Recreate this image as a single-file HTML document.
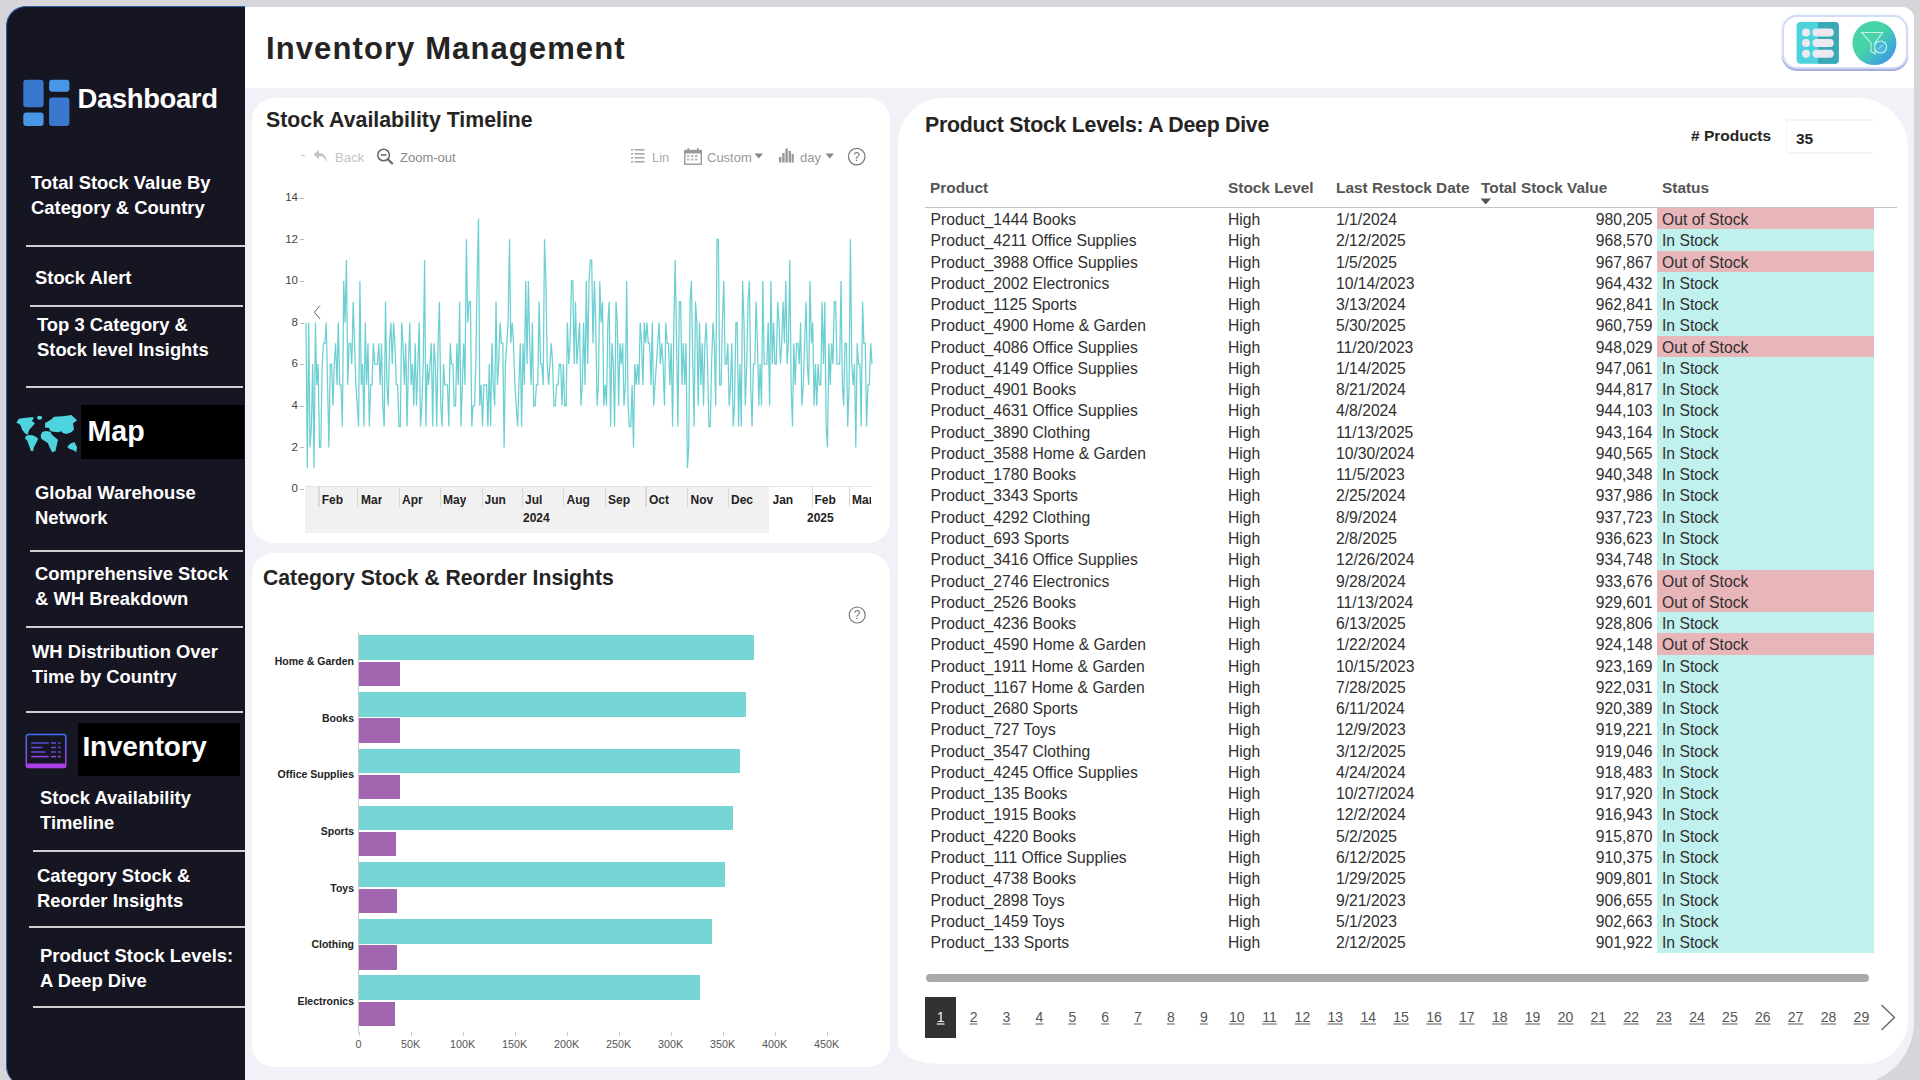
<!DOCTYPE html>
<html><head><meta charset="utf-8"><title>Inventory Management</title>
<style>
*{margin:0;padding:0;box-sizing:border-box}
html,body{width:1920px;height:1080px;overflow:hidden;background:#d6d5da;font-family:"Liberation Sans",sans-serif;position:relative}
.abs{position:absolute}
#side{position:absolute;left:6px;top:6px;width:239px;height:1080px;background:#161522;border-radius:20px 0 0 20px;border-top:1px solid #2d5ea8;border-left:1px solid #2d5ea8}
.nav{position:absolute;color:#fff;font-weight:bold;font-size:18.4px;line-height:24.7px;white-space:nowrap;margin-top:0.8px}
.sep{position:absolute;height:2px;background:#cfcfd2}
.hdr{position:absolute;color:#fff;font-weight:bold;white-space:nowrap}
#main{position:absolute;left:245px;top:7px;width:1669px;height:1078px;background:#f2f1f7;border-top-right-radius:12px;border-bottom-right-radius:63px;overflow:hidden}
#mainhead{position:absolute;left:0;top:0;width:1671px;height:81px;background:#fff}
.card{position:absolute;background:#fff}
.ttl{position:absolute;font-weight:bold;color:#252423;white-space:nowrap}
.tb{position:absolute;font-size:13px;color:#999;white-space:nowrap;margin-top:1.5px}
.yl{position:absolute;font-size:11.5px;color:#444;text-align:right;width:30px}
.ml{position:absolute;font-size:12px;font-weight:bold;color:#222;white-space:nowrap}
.cl{position:absolute;font-size:10.5px;font-weight:bold;color:#222;white-space:nowrap;text-align:right;width:110px}
.xl{position:absolute;font-size:10.8px;color:#555;white-space:nowrap;text-align:center;width:40px}
.th{position:absolute;font-size:15.4px;font-weight:bold;color:#555;white-space:nowrap;top:178.7px}
.tr{position:absolute;left:0;width:1920px;height:21.23px;font-size:15.7px;color:#303030;white-space:nowrap}
.tr span{position:absolute;top:0;line-height:23px}
.c1{left:930.5px}.c2{left:1228px}.c3{left:1336px}
.c4{left:1501.5px;width:151px;text-align:right}
.c5{left:1657px;width:217px;padding-left:5px;height:21.6px}
.c5.in{background:#c0f1ef}.c5.out{background:#e8b5b9}
.pg{position:absolute;top:997px;width:31px;height:41px;line-height:41px;text-align:center;font-size:14px;color:#555;text-decoration:underline;text-decoration-color:#aaa;text-decoration-thickness:2px;text-underline-offset:1.2px}
.pg.cur{background:#323232;color:#f4f4f4}

</style></head><body>
<div id="side">
</div>

<svg class="abs" style="left:23px;top:79px" width="47" height="47">
  <rect x="0.3" y="0.7" width="20.3" height="27.5" rx="3" fill="#3a78d0"/>
  <rect x="26.1" y="0.7" width="20.3" height="12.1" rx="3" fill="#4a96e6"/>
  <rect x="0.3" y="33.4" width="20.3" height="13.5" rx="3" fill="#4a96e6"/>
  <rect x="26.1" y="18.5" width="20.3" height="28.4" rx="3" fill="#3a78d0"/>
</svg>
<svg class="abs" style="left:14px;top:410px" width="68" height="48">
  <g fill="#4ed4de">
  <path d="M2.7,12.2 L4.9,8.7 L12,7.8 L19.1,7.1 L19.6,8.9 L17.8,10.7 L20.9,13.3 L18.7,16 L15.1,20 L14.2,23.1 L13.3,24.9 L10.7,23.1 L8,19.6 L6.7,15.6 L4.9,13.8 L2.7,12.9 Z"/>
  <path d="M11.6,26.2 L14.7,24.9 L18.7,25.3 L23.1,27.6 L24,29.3 L22.2,32.9 L20,36.9 L19.1,41.3 L16.9,40.9 L15.1,35.6 L13.3,30.7 L11.1,28.4 Z"/>
  <ellipse cx="25.6" cy="7.8" rx="2.6" ry="2"/>
  <path d="M31.1,12.9 L36.9,9.8 L40,6.7 L48.9,6.2 L57.3,5.1 L63.1,10.2 L59.1,13.3 L60,19.6 L57.3,22.2 L52.4,24 L48.9,23.1 L47.1,21.3 L44.4,22.2 L39.1,21.8 L36.4,20.9 L34.7,17.8 L31.1,17.8 Z"/>
  <path d="M26.7,24.9 L28.4,21.8 L32,20.9 L36.4,21.8 L38.2,24.9 L44,29.8 L42.7,35.6 L41.3,41.3 L38.2,42.2 L35.6,37.3 L33.8,32.9 L30.2,30.7 L27.1,28.4 Z"/>
  <path d="M53.3,36.9 L56,33.8 L60.4,32 L63.1,37.3 L62.2,42.2 L59.1,40 L55.6,39.1 Z"/>
  </g>
</svg>
<svg class="abs" style="left:25px;top:733px" width="43" height="37">
  <defs><linearGradient id="ig" x1="0" y1="0" x2="0" y2="1"><stop offset="0" stop-color="#3d74f0"/><stop offset="1" stop-color="#b03ce8"/></linearGradient></defs>
  <rect x="1.3" y="1.5" width="39.5" height="33" rx="2" fill="none" stroke="url(#ig)" stroke-width="1.5"/>
  <rect x="1.3" y="30.5" width="39.5" height="4.3" rx="1" fill="#a83fe6"/>
  <g stroke-width="1.5">
    <g stroke="#5550dc"><line x1="6.3" y1="10" x2="23.7" y2="10"/><line x1="26" y1="10" x2="31" y2="10"/><line x1="33" y1="10" x2="35.7" y2="10"/></g>
    <g stroke="#5c4edc"><line x1="6.3" y1="14.5" x2="17.5" y2="14.5"/><line x1="26" y1="14.5" x2="31" y2="14.5"/><line x1="33" y1="14.5" x2="35.7" y2="14.5"/></g>
    <g stroke="#6a48de"><line x1="6.3" y1="19" x2="20.5" y2="19"/><line x1="26" y1="19" x2="31" y2="19"/><line x1="33" y1="19" x2="35.7" y2="19"/></g>
    <g stroke="#9444ee"><line x1="6.3" y1="23.6" x2="23.7" y2="23.6"/><line x1="26" y1="23.6" x2="31" y2="23.6"/><line x1="33" y1="23.6" x2="35.7" y2="23.6"/></g>
  </g>
</svg>
<div class="hdr" style="left:77.5px;top:82.5px;font-size:27.5px;letter-spacing:-0.4px">Dashboard</div>
<div class="nav" style="left:31px;top:170px">Total Stock Value By<br>Category &amp; Country</div>
<div class="sep" style="left:26px;top:245px;width:219px"></div>
<div class="nav" style="left:35px;top:265px">Stock Alert</div>
<div class="sep" style="left:30px;top:305px;width:213px"></div>
<div class="nav" style="left:37px;top:312px">Top 3 Category &amp;<br>Stock level Insights</div>
<div class="sep" style="left:26px;top:386px;width:217px"></div>
<div class="abs" style="left:81px;top:405px;width:163px;height:54px;background:#000"></div>
<div class="hdr" style="left:87.5px;top:414.5px;font-size:28.6px">Map</div>
<div class="nav" style="left:35px;top:480px">Global Warehouse<br>Network</div>
<div class="sep" style="left:30px;top:550px;width:213px"></div>
<div class="nav" style="left:35px;top:561px">Comprehensive Stock<br>&amp; WH Breakdown</div>
<div class="sep" style="left:26px;top:626px;width:217px"></div>
<div class="nav" style="left:32px;top:639px">WH Distribution Over<br>Time by Country</div>
<div class="sep" style="left:26px;top:711px;width:217px"></div>
<div class="abs" style="left:78px;top:723px;width:162px;height:53px;background:#000"></div>
<div class="hdr" style="left:82.5px;top:731px;font-size:28px;letter-spacing:-0.2px">Inventory</div>
<div class="nav" style="left:40px;top:785px">Stock Availability<br>Timeline</div>
<div class="sep" style="left:33px;top:850px;width:212px"></div>
<div class="nav" style="left:37px;top:863px">Category Stock &amp;<br>Reorder Insights</div>
<div class="sep" style="left:29px;top:926px;width:216px"></div>
<div class="nav" style="left:40px;top:943px">Product Stock Levels:<br>A Deep Dive</div>
<div class="sep" style="left:33px;top:1006px;width:212px"></div>

<div id="main">
  <div id="mainhead"></div>
</div>

<div class="abs" style="left:1782px;top:15px;width:126px;height:54px;border-radius:15px;border:2px solid #d3dcf6;box-shadow:0 2px 0 #a8acdc, 0 0 3px #dfe6fb;background:#fff"></div>
<svg class="abs" style="left:1796px;top:21px" width="44" height="44">
  <rect x="0.6" y="0.9" width="42.2" height="41.9" rx="4" fill="#4dd3de"/>
  <path d="M22,0.9 H38.8 A4,4 0 0 1 42.8,4.9 V38.8 A4,4 0 0 1 38.8,42.8 H22 Z" fill="#3aa9b5"/>
  <g fill="#eceaf0">
   <circle cx="10" cy="11.5" r="4"/><circle cx="10" cy="22.1" r="4"/><circle cx="10" cy="32.7" r="4"/>
   <rect x="16.5" y="7.5" width="21.3" height="8" rx="4"/><rect x="16.5" y="18.1" width="21.3" height="8" rx="4"/><rect x="16.5" y="28.7" width="21.3" height="8" rx="4"/>
  </g>
</svg>
<svg class="abs" style="left:1851px;top:20px" width="47" height="47">
  <defs><linearGradient id="fg" x1="0.2" y1="0.2" x2="0.9" y2="0.9"><stop offset="0.35" stop-color="#47d4a9"/><stop offset="1" stop-color="#3a98ec"/></linearGradient></defs>
  <circle cx="23.4" cy="23.1" r="22" fill="url(#fg)"/>
  <path d="M10.6,12.5 H31.5 L24,23 V34 L20,31.5 V23 Z" fill="none" stroke="#c8f0ea" stroke-width="1.1"/>
  <circle cx="29.6" cy="27" r="6" fill="#48b8d8" stroke="#c8f0ea" stroke-width="1.1"/>
  <path d="M27.5,29 L31.5,25" stroke="#c8f0ea" stroke-width="1"/>
</svg>
<div class="ttl" style="left:266px;top:31px;font-size:31px;letter-spacing:1.1px">Inventory Management</div>

<!-- card 1 -->
<div class="card" style="left:252px;top:98px;width:638px;height:445px;border-radius:22px">
  <svg class="abs" style="left:0;top:0" width="638" height="445">
    <polyline points="54.0,224.5 55.3,370.2 56.7,224.5 58.0,349.4 59.4,328.6 60.7,266.1 62.1,370.2 63.4,224.5 64.8,286.9 66.1,266.1 67.5,349.4 68.8,349.4 70.2,266.1 71.5,245.3 72.9,245.3 74.2,224.5 75.6,286.9 76.9,349.4 78.3,266.1 79.6,266.1 81.0,307.8 82.3,266.1 83.6,245.3 85.0,286.9 86.3,224.5 87.7,286.9 89.0,286.9 90.4,328.6 91.7,182.9 93.1,224.5 94.4,162.1 95.8,286.9 97.1,245.3 98.5,245.3 99.8,266.1 101.2,203.7 102.5,245.3 103.9,286.9 105.2,307.8 106.6,328.6 107.9,182.9 109.3,286.9 110.6,266.1 111.9,328.6 113.3,224.5 114.6,286.9 116.0,245.3 117.3,328.6 118.7,286.9 120.0,286.9 121.4,245.3 122.7,266.1 124.1,266.1 125.4,266.1 126.8,245.3 128.1,286.9 129.5,245.3 130.8,307.8 132.2,328.6 133.5,203.7 134.9,286.9 136.2,307.8 137.6,245.3 138.9,224.5 140.2,266.1 141.6,224.5 142.9,245.3 144.3,286.9 145.6,286.9 147.0,328.6 148.3,328.6 149.7,224.5 151.0,245.3 152.4,286.9 153.7,245.3 155.1,328.6 156.4,266.1 157.8,224.5 159.1,286.9 160.5,266.1 161.8,307.8 163.2,245.3 164.5,307.8 165.9,266.1 167.2,224.5 168.5,328.6 169.9,307.8 171.2,266.1 172.6,162.1 173.9,328.6 175.3,266.1 176.6,286.9 178.0,266.1 179.3,245.3 180.7,328.6 182.0,245.3 183.4,266.1 184.7,328.6 186.1,245.3 187.4,203.7 188.8,307.8 190.1,328.6 191.5,266.1 192.8,286.9 194.2,286.9 195.5,286.9 196.8,328.6 198.2,245.3 199.5,266.1 200.9,266.1 202.2,307.8 203.6,307.8 204.9,245.3 206.3,286.9 207.6,203.7 209.0,328.6 210.3,286.9 211.7,245.3 213.0,286.9 214.4,141.3 215.7,224.5 217.1,203.7 218.4,203.7 219.8,328.6 221.1,307.8 222.5,307.8 223.8,266.1 225.1,182.9 226.5,120.5 227.8,307.8 229.2,286.9 230.5,328.6 231.9,286.9 233.2,286.9 234.6,286.9 235.9,328.6 237.3,266.1 238.6,328.6 240.0,245.3 241.3,286.9 242.7,307.8 244.0,203.7 245.4,286.9 246.7,266.1 248.1,224.5 249.4,245.3 250.8,245.3 252.1,349.4 253.4,266.1 254.8,245.3 256.1,224.5 257.5,141.3 258.8,245.3 260.2,224.5 261.5,245.3 262.9,286.9 264.2,307.8 265.6,328.6 266.9,286.9 268.3,245.3 269.6,328.6 271.0,245.3 272.3,286.9 273.7,182.9 275.0,266.1 276.4,182.9 277.7,245.3 279.1,286.9 280.4,224.5 281.7,307.8 283.1,307.8 284.4,286.9 285.8,286.9 287.1,203.7 288.5,266.1 289.8,266.1 291.2,286.9 292.5,141.3 293.9,182.9 295.2,266.1 296.6,286.9 297.9,266.1 299.3,245.3 300.6,266.1 302.0,307.8 303.3,307.8 304.7,286.9 306.0,286.9 307.4,266.1 308.7,266.1 310.0,307.8 311.4,266.1 312.7,307.8 314.1,307.8 315.4,224.5 316.8,266.1 318.1,245.3 319.5,182.9 320.8,182.9 322.2,266.1 323.5,203.7 324.9,266.1 326.2,245.3 327.6,224.5 328.9,307.8 330.3,286.9 331.6,224.5 333.0,286.9 334.3,182.9 335.7,266.1 337.0,182.9 338.3,162.1 339.7,162.1 341.0,245.3 342.4,182.9 343.7,224.5 345.1,307.8 346.4,286.9 347.8,182.9 349.1,224.5 350.5,203.7 351.8,307.8 353.2,286.9 354.5,307.8 355.9,224.5 357.2,203.7 358.6,328.6 359.9,245.3 361.3,266.1 362.6,328.6 364.0,203.7 365.3,224.5 366.6,307.8 368.0,245.3 369.3,266.1 370.7,245.3 372.0,307.8 373.4,286.9 374.7,182.9 376.1,307.8 377.4,328.6 378.8,328.6 380.1,286.9 381.5,349.4 382.8,266.1 384.2,286.9 385.5,266.1 386.9,286.9 388.2,224.5 389.6,245.3 390.9,286.9 392.3,224.5 393.6,245.3 394.9,224.5 396.3,245.3 397.6,245.3 399.0,286.9 400.3,224.5 401.7,307.8 403.0,286.9 404.4,266.1 405.7,245.3 407.1,224.5 408.4,266.1 409.8,245.3 411.1,266.1 412.5,307.8 413.8,224.5 415.2,245.3 416.5,245.3 417.9,286.9 419.2,245.3 420.6,328.6 421.9,224.5 423.2,162.1 424.6,245.3 425.9,328.6 427.3,203.7 428.6,203.7 430.0,286.9 431.3,245.3 432.7,286.9 434.0,245.3 435.4,370.2 436.7,349.4 438.1,203.7 439.4,182.9 440.8,266.1 442.1,328.6 443.5,203.7 444.8,224.5 446.2,307.8 447.5,224.5 448.9,286.9 450.2,245.3 451.5,307.8 452.9,245.3 454.2,224.5 455.6,266.1 456.9,328.6 458.3,328.6 459.6,266.1 461.0,224.5 462.3,245.3 463.7,307.8 465.0,141.3 466.4,141.3 467.7,286.9 469.1,286.9 470.4,224.5 471.8,182.9 473.1,266.1 474.5,266.1 475.8,245.3 477.2,307.8 478.5,286.9 479.8,245.3 481.2,328.6 482.5,307.8 483.9,224.5 485.2,224.5 486.6,328.6 487.9,266.1 489.3,328.6 490.6,182.9 492.0,224.5 493.3,307.8 494.7,266.1 496.0,203.7 497.4,182.9 498.7,286.9 500.1,328.6 501.4,266.1 502.8,266.1 504.1,203.7 505.5,245.3 506.8,307.8 508.1,266.1 509.5,307.8 510.8,182.9 512.2,266.1 513.5,266.1 514.9,266.1 516.2,224.5 517.6,307.8 518.9,182.9 520.3,266.1 521.6,224.5 523.0,266.1 524.3,266.1 525.7,203.7 527.0,224.5 528.4,266.1 529.7,245.3 531.1,203.7 532.4,245.3 533.8,182.9 535.1,266.1 536.4,245.3 537.8,162.1 539.1,286.9 540.5,328.6 541.8,245.3 543.2,286.9 544.5,245.3 545.9,245.3 547.2,266.1 548.6,224.5 549.9,307.8 551.3,286.9 552.6,245.3 554.0,203.7 555.3,266.1 556.7,286.9 558.0,182.9 559.4,245.3 560.7,224.5 562.1,307.8 563.4,266.1 564.7,307.8 566.1,266.1 567.4,286.9 568.8,286.9 570.1,203.7 571.5,266.1 572.8,203.7 574.2,328.6 575.5,349.4 576.9,245.3 578.2,286.9 579.6,245.3 580.9,266.1 582.3,203.7 583.6,203.7 585.0,266.1 586.3,266.1 587.7,266.1 589.0,182.9 590.4,286.9 591.7,307.8 593.0,245.3 594.4,245.3 595.7,328.6 597.1,286.9 598.4,141.3 599.8,266.1 601.1,286.9 602.5,266.1 603.8,349.4 605.2,245.3 606.5,266.1 607.9,266.1 609.2,328.6 610.6,203.7 611.9,245.3 613.3,245.3 614.6,328.6 616.0,286.9 617.3,286.9 618.7,245.3 620.0,266.1" fill="none" stroke="#6ccfd2" stroke-width="1.25"/>
  </svg>
</div>
<div class="ttl" style="left:266px;top:107.5px;font-size:21.3px">Stock Availability Timeline</div>
<!-- line chart toolbar -->
<div class="abs" style="left:301px;top:155px;width:4px;height:1.3px;background:#ccc"></div>
<svg class="abs" style="left:312px;top:148px" width="17" height="17">
  <path d="M7,2 L1.5,6.5 L7,11 V8.2 C10.5,8 13.3,9.3 14.6,14.5 C15,9.5 12.5,5.2 7,4.9 Z" fill="#c4c4c4"/>
</svg>
<div class="tb" style="left:335px;top:148px;color:#c4c4c4">Back</div>
<svg class="abs" style="left:375px;top:147px" width="20" height="19">
  <circle cx="8.6" cy="8" r="5.8" fill="none" stroke="#666" stroke-width="1.5"/>
  <line x1="5.8" y1="8" x2="11.4" y2="8" stroke="#666" stroke-width="1.6"/>
  <line x1="12.8" y1="12.2" x2="17.8" y2="17" stroke="#666" stroke-width="2.2"/>
</svg>
<div class="tb" style="left:400px;top:148px;color:#888">Zoom-out</div>
<svg class="abs" style="left:631px;top:148px" width="14" height="16">
  <g fill="#aaa"><rect x="0" y="1" width="2" height="1.6"/><rect x="3.5" y="1" width="10" height="1.6"/>
  <rect x="0" y="5" width="2" height="1.6"/><rect x="3.5" y="5" width="10" height="1.6"/>
  <rect x="0" y="9" width="2" height="1.6"/><rect x="3.5" y="9" width="10" height="1.6"/>
  <rect x="0" y="13" width="2" height="1.6"/><rect x="3.5" y="13" width="10" height="1.6"/></g>
</svg>
<div class="tb" style="left:652px;top:148px;color:#aaa">Lin</div>
<svg class="abs" style="left:684px;top:148px" width="19" height="17">
  <rect x="0.8" y="2.5" width="16.5" height="13.7" fill="none" stroke="#999" stroke-width="1.4"/>
  <rect x="0.8" y="2.5" width="16.5" height="3" fill="#999"/>
  <rect x="3.5" y="0" width="1.6" height="4" fill="#999"/><rect x="13" y="0" width="1.6" height="4" fill="#999"/>
  <g fill="#bbb"><rect x="3" y="7" width="2.5" height="2"/><rect x="7" y="7" width="2.5" height="2"/><rect x="11" y="7" width="2.5" height="2"/>
  <rect x="3" y="10.5" width="2.5" height="2"/><rect x="7" y="10.5" width="2.5" height="2"/><rect x="11" y="10.5" width="2.5" height="2"/></g>
</svg>
<div class="tb" style="left:707px;top:148px;color:#999">Custom</div>
<svg class="abs" style="left:754px;top:153px" width="10" height="6"><path d="M0.5,0.5 H9 L4.75,5.5 Z" fill="#888"/></svg>
<svg class="abs" style="left:779px;top:148px" width="15" height="15">
  <g fill="#999"><rect x="0" y="9" width="2.4" height="5.5"/><rect x="3.2" y="5" width="2.4" height="9.5"/><rect x="6.4" y="0.5" width="2.4" height="14"/><rect x="9.6" y="3" width="2.4" height="11.5"/><rect x="12.6" y="6" width="2.2" height="8.5"/></g>
</svg>
<div class="tb" style="left:800px;top:148px;color:#999">day</div>
<svg class="abs" style="left:825px;top:153px" width="10" height="6"><path d="M0.5,0.5 H9 L4.75,5.5 Z" fill="#888"/></svg>
<svg class="abs" style="left:847px;top:147px" width="20" height="20">
  <circle cx="9.7" cy="9.6" r="8.3" fill="none" stroke="#777" stroke-width="1.2"/>
  <text x="9.7" y="14" font-family="Liberation Sans" font-size="12" fill="#777" text-anchor="middle">?</text>
</svg>
<!-- y axis -->
<div class="yl" style="left:268px;top:482.2px">0</div><div class="abs" style="left:300px;top:489.0px;width:4px;height:1px;background:#bbb"></div>
<div class="yl" style="left:268px;top:440.6px">2</div><div class="abs" style="left:300px;top:447.4px;width:4px;height:1px;background:#bbb"></div>
<div class="yl" style="left:268px;top:399.0px">4</div><div class="abs" style="left:300px;top:405.8px;width:4px;height:1px;background:#bbb"></div>
<div class="yl" style="left:268px;top:357.3px">6</div><div class="abs" style="left:300px;top:364.1px;width:4px;height:1px;background:#bbb"></div>
<div class="yl" style="left:268px;top:315.7px">8</div><div class="abs" style="left:300px;top:322.5px;width:4px;height:1px;background:#bbb"></div>
<div class="yl" style="left:268px;top:274.1px">10</div><div class="abs" style="left:300px;top:280.9px;width:4px;height:1px;background:#bbb"></div>
<div class="yl" style="left:268px;top:232.5px">12</div><div class="abs" style="left:300px;top:239.3px;width:4px;height:1px;background:#bbb"></div>
<div class="yl" style="left:268px;top:190.9px">14</div><div class="abs" style="left:300px;top:197.7px;width:4px;height:1px;background:#bbb"></div>
<!-- x band -->
<div class="abs" style="left:305px;top:487px;width:464px;height:46px;background:#f1f1f1"></div>
<div class="abs" style="left:305px;top:486px;width:568px;height:1.2px;background:#e2e2e2"></div>
<div class="abs" style="left:318.3px;top:487px;width:1.3px;height:20px;background:#d8d8d8"></div>
<div class="abs" style="left:357.0px;top:487px;width:1.3px;height:20px;background:#d8d8d8"></div>
<div class="abs" style="left:398.7px;top:487px;width:1.3px;height:20px;background:#d8d8d8"></div>
<div class="abs" style="left:439.5px;top:487px;width:1.3px;height:20px;background:#d8d8d8"></div>
<div class="abs" style="left:481.7px;top:487px;width:1.3px;height:20px;background:#d8d8d8"></div>
<div class="abs" style="left:522.0px;top:487px;width:1.3px;height:20px;background:#d8d8d8"></div>
<div class="abs" style="left:562.7px;top:487px;width:1.3px;height:20px;background:#d8d8d8"></div>
<div class="abs" style="left:604.6px;top:487px;width:1.3px;height:20px;background:#d8d8d8"></div>
<div class="abs" style="left:645.4px;top:487px;width:1.3px;height:20px;background:#d8d8d8"></div>
<div class="abs" style="left:687.0px;top:487px;width:1.3px;height:20px;background:#d8d8d8"></div>
<div class="abs" style="left:728.0px;top:487px;width:1.3px;height:20px;background:#d8d8d8"></div>
<div class="abs" style="left:811.5px;top:487px;width:1.3px;height:20px;background:#d8d8d8"></div>
<div class="abs" style="left:848.6px;top:487px;width:1.3px;height:20px;background:#d8d8d8"></div>
<div class="ml" style="left:321.7px;top:493px;max-width:548.8px;overflow:hidden">Feb</div>
<div class="ml" style="left:361.0px;top:493px;max-width:509.5px;overflow:hidden">Mar</div>
<div class="ml" style="left:402.0px;top:493px;max-width:468.5px;overflow:hidden">Apr</div>
<div class="ml" style="left:443.0px;top:493px;max-width:427.5px;overflow:hidden">May</div>
<div class="ml" style="left:484.5px;top:493px;max-width:386.0px;overflow:hidden">Jun</div>
<div class="ml" style="left:525.0px;top:493px;max-width:345.5px;overflow:hidden">Jul</div>
<div class="ml" style="left:566.5px;top:493px;max-width:304.0px;overflow:hidden">Aug</div>
<div class="ml" style="left:608.0px;top:493px;max-width:262.5px;overflow:hidden">Sep</div>
<div class="ml" style="left:649.0px;top:493px;max-width:221.5px;overflow:hidden">Oct</div>
<div class="ml" style="left:690.6px;top:493px;max-width:179.9px;overflow:hidden">Nov</div>
<div class="ml" style="left:731.0px;top:493px;max-width:139.5px;overflow:hidden">Dec</div>
<div class="ml" style="left:772.5px;top:493px;max-width:98.0px;overflow:hidden">Jan</div>
<div class="ml" style="left:814.5px;top:493px;max-width:56.0px;overflow:hidden">Feb</div>
<div class="ml" style="left:852.0px;top:493px;max-width:18.5px;overflow:hidden">Mar</div>
<div class="ml" style="left:523px;top:510.5px">2024</div>
<div class="ml" style="left:807px;top:510.5px">2025</div>
<svg class="abs" style="left:312px;top:304px" width="10" height="17"><path d="M8,1.5 L2.5,8.3 L8,15" fill="none" stroke="#666" stroke-width="1"/></svg>


<!-- card 2 -->
<div class="card" style="left:252px;top:553px;width:638px;height:514px;border-radius:22px"></div>
<div class="ttl" style="left:263px;top:566px;font-size:21.2px">Category Stock &amp; Reorder Insights</div>
<svg class="abs" style="left:847px;top:605px" width="20" height="20">
  <circle cx="10.2" cy="10" r="8" fill="none" stroke="#777" stroke-width="1.2"/>
  <text x="10.2" y="14.3" font-family="Liberation Sans" font-size="12" fill="#777" text-anchor="middle">?</text>
</svg>
<div class="abs" style="left:358px;top:632px;width:1px;height:401px;background:#c8c8c8"></div>
<div class="abs" style="left:358.5px;top:635.3px;width:395.7px;height:24.7px;background:#76d6d6"></div>
<div class="abs" style="left:358.5px;top:661.5px;width:41.2px;height:24.5px;background:#a266b0"></div>
<div class="cl" style="left:244px;top:654.8px">Home &amp; Garden</div>
<div class="abs" style="left:358.5px;top:692.2px;width:387.7px;height:24.7px;background:#76d6d6"></div>
<div class="abs" style="left:358.5px;top:718.4px;width:41.2px;height:24.5px;background:#a266b0"></div>
<div class="cl" style="left:244px;top:711.7px">Books</div>
<div class="abs" style="left:358.5px;top:748.7px;width:381.9px;height:24.7px;background:#76d6d6"></div>
<div class="abs" style="left:358.5px;top:774.9px;width:41.2px;height:24.5px;background:#a266b0"></div>
<div class="cl" style="left:244px;top:768.2px">Office Supplies</div>
<div class="abs" style="left:358.5px;top:805.5px;width:374.8px;height:24.7px;background:#76d6d6"></div>
<div class="abs" style="left:358.5px;top:831.7px;width:37.4px;height:24.5px;background:#a266b0"></div>
<div class="cl" style="left:244px;top:825.0px">Sports</div>
<div class="abs" style="left:358.5px;top:862.4px;width:366.4px;height:24.7px;background:#76d6d6"></div>
<div class="abs" style="left:358.5px;top:888.6px;width:38.7px;height:24.5px;background:#a266b0"></div>
<div class="cl" style="left:244px;top:881.9px">Toys</div>
<div class="abs" style="left:358.5px;top:918.9px;width:353.5px;height:24.7px;background:#76d6d6"></div>
<div class="abs" style="left:358.5px;top:945.1px;width:38.7px;height:24.5px;background:#a266b0"></div>
<div class="cl" style="left:244px;top:938.4px">Clothing</div>
<div class="abs" style="left:358.5px;top:975.3px;width:341.5px;height:24.7px;background:#76d6d6"></div>
<div class="abs" style="left:358.5px;top:1001.5px;width:36.1px;height:24.5px;background:#a266b0"></div>
<div class="cl" style="left:244px;top:994.8px">Electronics</div>
<div class="abs" style="left:358.5px;top:1032px;width:1px;height:4px;background:#ccc"></div>
<div class="xl" style="left:338.5px;top:1038px">0</div>
<div class="abs" style="left:410.5px;top:1032px;width:1px;height:4px;background:#ccc"></div>
<div class="xl" style="left:390.5px;top:1038px">50K</div>
<div class="abs" style="left:462.5px;top:1032px;width:1px;height:4px;background:#ccc"></div>
<div class="xl" style="left:442.5px;top:1038px">100K</div>
<div class="abs" style="left:514.5px;top:1032px;width:1px;height:4px;background:#ccc"></div>
<div class="xl" style="left:494.5px;top:1038px">150K</div>
<div class="abs" style="left:566.5px;top:1032px;width:1px;height:4px;background:#ccc"></div>
<div class="xl" style="left:546.5px;top:1038px">200K</div>
<div class="abs" style="left:618.5px;top:1032px;width:1px;height:4px;background:#ccc"></div>
<div class="xl" style="left:598.5px;top:1038px">250K</div>
<div class="abs" style="left:670.5px;top:1032px;width:1px;height:4px;background:#ccc"></div>
<div class="xl" style="left:650.5px;top:1038px">300K</div>
<div class="abs" style="left:722.5px;top:1032px;width:1px;height:4px;background:#ccc"></div>
<div class="xl" style="left:702.5px;top:1038px">350K</div>
<div class="abs" style="left:774.5px;top:1032px;width:1px;height:4px;background:#ccc"></div>
<div class="xl" style="left:754.5px;top:1038px">400K</div>
<div class="abs" style="left:826.5px;top:1032px;width:1px;height:4px;background:#ccc"></div>
<div class="xl" style="left:806.5px;top:1038px">450K</div>


<!-- card 3 -->
<div class="card" style="left:898px;top:98px;width:1010px;height:966px;border-radius:45px 50px 44px 42px / 45px 50px 44px 22px"></div>
<div class="ttl" style="left:925px;top:113px;font-size:21.3px;letter-spacing:-0.25px">Product Stock Levels: A Deep Dive</div>
<div class="th" style="left:930px">Product</div>
<div class="th" style="left:1228px">Stock Level</div>
<div class="th" style="left:1336px">Last Restock Date</div>
<div class="th" style="left:1481px">Total Stock Value</div>
<div class="th" style="left:1662px">Status</div>
<div class="abs" style="left:925px;top:207px;width:972px;height:1.2px;background:#c2c2c2"></div>
<div class="tr" style="top:208.0px"><span class="c1">Product_1444 Books</span><span class="c2">High</span><span class="c3">1/1/2024</span><span class="c4">980,205</span><span class="c5 out">Out of Stock</span></div>
<div class="tr" style="top:229.3px"><span class="c1">Product_4211 Office Supplies</span><span class="c2">High</span><span class="c3">2/12/2025</span><span class="c4">968,570</span><span class="c5 in">In Stock</span></div>
<div class="tr" style="top:250.5px"><span class="c1">Product_3988 Office Supplies</span><span class="c2">High</span><span class="c3">1/5/2025</span><span class="c4">967,867</span><span class="c5 out">Out of Stock</span></div>
<div class="tr" style="top:271.8px"><span class="c1">Product_2002 Electronics</span><span class="c2">High</span><span class="c3">10/14/2023</span><span class="c4">964,432</span><span class="c5 in">In Stock</span></div>
<div class="tr" style="top:293.1px"><span class="c1">Product_1125 Sports</span><span class="c2">High</span><span class="c3">3/13/2024</span><span class="c4">962,841</span><span class="c5 in">In Stock</span></div>
<div class="tr" style="top:314.3px"><span class="c1">Product_4900 Home &amp; Garden</span><span class="c2">High</span><span class="c3">5/30/2025</span><span class="c4">960,759</span><span class="c5 in">In Stock</span></div>
<div class="tr" style="top:335.6px"><span class="c1">Product_4086 Office Supplies</span><span class="c2">High</span><span class="c3">11/20/2023</span><span class="c4">948,029</span><span class="c5 out">Out of Stock</span></div>
<div class="tr" style="top:356.9px"><span class="c1">Product_4149 Office Supplies</span><span class="c2">High</span><span class="c3">1/14/2025</span><span class="c4">947,061</span><span class="c5 in">In Stock</span></div>
<div class="tr" style="top:378.1px"><span class="c1">Product_4901 Books</span><span class="c2">High</span><span class="c3">8/21/2024</span><span class="c4">944,817</span><span class="c5 in">In Stock</span></div>
<div class="tr" style="top:399.4px"><span class="c1">Product_4631 Office Supplies</span><span class="c2">High</span><span class="c3">4/8/2024</span><span class="c4">944,103</span><span class="c5 in">In Stock</span></div>
<div class="tr" style="top:420.6px"><span class="c1">Product_3890 Clothing</span><span class="c2">High</span><span class="c3">11/13/2025</span><span class="c4">943,164</span><span class="c5 in">In Stock</span></div>
<div class="tr" style="top:441.9px"><span class="c1">Product_3588 Home &amp; Garden</span><span class="c2">High</span><span class="c3">10/30/2024</span><span class="c4">940,565</span><span class="c5 in">In Stock</span></div>
<div class="tr" style="top:463.2px"><span class="c1">Product_1780 Books</span><span class="c2">High</span><span class="c3">11/5/2023</span><span class="c4">940,348</span><span class="c5 in">In Stock</span></div>
<div class="tr" style="top:484.4px"><span class="c1">Product_3343 Sports</span><span class="c2">High</span><span class="c3">2/25/2024</span><span class="c4">937,986</span><span class="c5 in">In Stock</span></div>
<div class="tr" style="top:505.7px"><span class="c1">Product_4292 Clothing</span><span class="c2">High</span><span class="c3">8/9/2024</span><span class="c4">937,723</span><span class="c5 in">In Stock</span></div>
<div class="tr" style="top:527.0px"><span class="c1">Product_693 Sports</span><span class="c2">High</span><span class="c3">2/8/2025</span><span class="c4">936,623</span><span class="c5 in">In Stock</span></div>
<div class="tr" style="top:548.2px"><span class="c1">Product_3416 Office Supplies</span><span class="c2">High</span><span class="c3">12/26/2024</span><span class="c4">934,748</span><span class="c5 in">In Stock</span></div>
<div class="tr" style="top:569.5px"><span class="c1">Product_2746 Electronics</span><span class="c2">High</span><span class="c3">9/28/2024</span><span class="c4">933,676</span><span class="c5 out">Out of Stock</span></div>
<div class="tr" style="top:590.8px"><span class="c1">Product_2526 Books</span><span class="c2">High</span><span class="c3">11/13/2024</span><span class="c4">929,601</span><span class="c5 out">Out of Stock</span></div>
<div class="tr" style="top:612.0px"><span class="c1">Product_4236 Books</span><span class="c2">High</span><span class="c3">6/13/2025</span><span class="c4">928,806</span><span class="c5 in">In Stock</span></div>
<div class="tr" style="top:633.3px"><span class="c1">Product_4590 Home &amp; Garden</span><span class="c2">High</span><span class="c3">1/22/2024</span><span class="c4">924,148</span><span class="c5 out">Out of Stock</span></div>
<div class="tr" style="top:654.6px"><span class="c1">Product_1911 Home &amp; Garden</span><span class="c2">High</span><span class="c3">10/15/2023</span><span class="c4">923,169</span><span class="c5 in">In Stock</span></div>
<div class="tr" style="top:675.8px"><span class="c1">Product_1167 Home &amp; Garden</span><span class="c2">High</span><span class="c3">7/28/2025</span><span class="c4">922,031</span><span class="c5 in">In Stock</span></div>
<div class="tr" style="top:697.1px"><span class="c1">Product_2680 Sports</span><span class="c2">High</span><span class="c3">6/11/2024</span><span class="c4">920,389</span><span class="c5 in">In Stock</span></div>
<div class="tr" style="top:718.4px"><span class="c1">Product_727 Toys</span><span class="c2">High</span><span class="c3">12/9/2023</span><span class="c4">919,221</span><span class="c5 in">In Stock</span></div>
<div class="tr" style="top:739.6px"><span class="c1">Product_3547 Clothing</span><span class="c2">High</span><span class="c3">3/12/2025</span><span class="c4">919,046</span><span class="c5 in">In Stock</span></div>
<div class="tr" style="top:760.9px"><span class="c1">Product_4245 Office Supplies</span><span class="c2">High</span><span class="c3">4/24/2024</span><span class="c4">918,483</span><span class="c5 in">In Stock</span></div>
<div class="tr" style="top:782.2px"><span class="c1">Product_135 Books</span><span class="c2">High</span><span class="c3">10/27/2024</span><span class="c4">917,920</span><span class="c5 in">In Stock</span></div>
<div class="tr" style="top:803.4px"><span class="c1">Product_1915 Books</span><span class="c2">High</span><span class="c3">12/2/2024</span><span class="c4">916,943</span><span class="c5 in">In Stock</span></div>
<div class="tr" style="top:824.7px"><span class="c1">Product_4220 Books</span><span class="c2">High</span><span class="c3">5/2/2025</span><span class="c4">915,870</span><span class="c5 in">In Stock</span></div>
<div class="tr" style="top:846.0px"><span class="c1">Product_111 Office Supplies</span><span class="c2">High</span><span class="c3">6/12/2025</span><span class="c4">910,375</span><span class="c5 in">In Stock</span></div>
<div class="tr" style="top:867.2px"><span class="c1">Product_4738 Books</span><span class="c2">High</span><span class="c3">1/29/2025</span><span class="c4">909,801</span><span class="c5 in">In Stock</span></div>
<div class="tr" style="top:888.5px"><span class="c1">Product_2898 Toys</span><span class="c2">High</span><span class="c3">9/21/2023</span><span class="c4">906,655</span><span class="c5 in">In Stock</span></div>
<div class="tr" style="top:909.7px"><span class="c1">Product_1459 Toys</span><span class="c2">High</span><span class="c3">5/1/2023</span><span class="c4">902,663</span><span class="c5 in">In Stock</span></div>
<div class="tr" style="top:931.0px"><span class="c1">Product_133 Sports</span><span class="c2">High</span><span class="c3">2/12/2025</span><span class="c4">901,922</span><span class="c5 in">In Stock</span></div>
<div class="abs" style="left:926px;top:974px;width:943px;height:8px;border-radius:4px;background:#aaa"></div>
<div class="pg cur" style="left:925.2px">1</div>
<div class="pg" style="left:958.1px">2</div>
<div class="pg" style="left:991.0px">3</div>
<div class="pg" style="left:1023.9px">4</div>
<div class="pg" style="left:1056.8px">5</div>
<div class="pg" style="left:1089.7px">6</div>
<div class="pg" style="left:1122.5px">7</div>
<div class="pg" style="left:1155.4px">8</div>
<div class="pg" style="left:1188.3px">9</div>
<div class="pg" style="left:1221.2px">10</div>
<div class="pg" style="left:1254.0px">11</div>
<div class="pg" style="left:1286.9px">12</div>
<div class="pg" style="left:1319.8px">13</div>
<div class="pg" style="left:1352.7px">14</div>
<div class="pg" style="left:1385.6px">15</div>
<div class="pg" style="left:1418.5px">16</div>
<div class="pg" style="left:1451.3px">17</div>
<div class="pg" style="left:1484.2px">18</div>
<div class="pg" style="left:1517.1px">19</div>
<div class="pg" style="left:1550.0px">20</div>
<div class="pg" style="left:1582.8px">21</div>
<div class="pg" style="left:1615.7px">22</div>
<div class="pg" style="left:1648.6px">23</div>
<div class="pg" style="left:1681.5px">24</div>
<div class="pg" style="left:1714.4px">25</div>
<div class="pg" style="left:1747.2px">26</div>
<div class="pg" style="left:1780.1px">27</div>
<div class="pg" style="left:1813.0px">28</div>
<div class="pg" style="left:1845.9px">29</div>
<div class="th" style="left:1691px;top:127px;color:#252423;font-size:15.5px"># Products</div>
<div class="abs" style="left:1786px;top:119px;width:87px;height:35px;border-top:2px solid #f5f5f5;border-bottom:2px solid #f5f5f5;border-left:1.5px solid #f7f7f7"></div>
<div class="th" style="left:1796px;top:129.5px;color:#252423;font-size:15.5px">35</div>
<svg class="abs" style="left:1480px;top:198px" width="12" height="8"><path d="M0.5,0.5 H11 L5.75,6.5 Z" fill="#555"/></svg>
<svg class="abs" style="left:1877px;top:1002px" width="22" height="31"><path d="M4.5,3 L17.5,15.5 L4.5,28" fill="none" stroke="#666" stroke-width="1.4"/></svg>


</body></html>
